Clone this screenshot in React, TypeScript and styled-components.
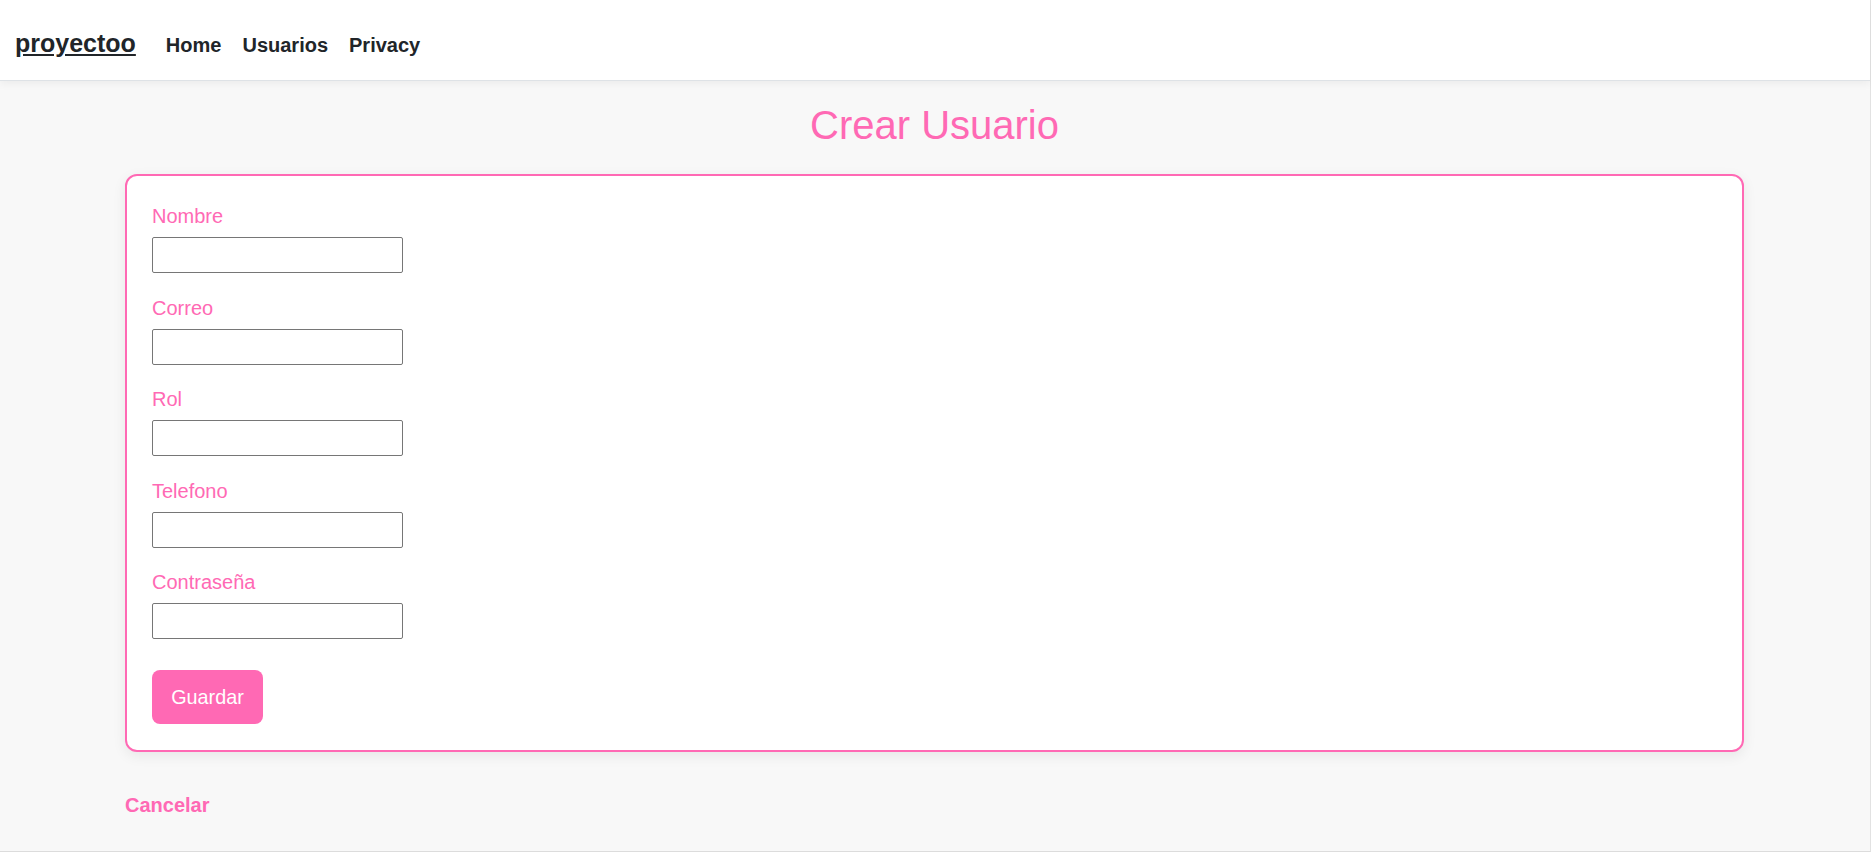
import styled, { createGlobalStyle } from "styled-components";

const GlobalStyle = createGlobalStyle`
  html, body {
    margin: 0;
    padding: 0;
  }
  body {
    font-family: "Liberation Sans", Arial, sans-serif;
    background: #f8f8f8;
    color: #212529;
  }
`;

const Page = styled.div`
  min-height: 100vh;
  box-sizing: border-box;
  border-right: 1px solid #e2e2e2;
  border-bottom: 1px solid #dcdcdc;
  background: #f8f8f8;
`;

const NavBar = styled.nav`
  height: 81px;
  box-sizing: border-box;
  padding: 29px 15px 0;
  display: flex;
  align-items: baseline;
  background: #fff;
  border-bottom: 1px solid #dee2e6;
  box-shadow: 0 3px 8px rgba(0, 0, 0, 0.05);
`;

const Brand = styled.a`
  font-size: 25px;
  font-weight: bold;
  color: #212529;
  text-decoration: underline;
  margin-right: 30px;
`;

const NavLinks = styled.div`
  display: flex;
  gap: 21px;
`;

const NavLink = styled.a`
  font-size: 20px;
  font-weight: bold;
  color: #212529;
  text-decoration: none;
`;

const Main = styled.main`
  padding: 0 126px 0 125px;
`;

const Title = styled.h1`
  margin: 22px 0 26px;
  font-size: 40px;
  font-weight: normal;
  line-height: normal;
  color: #ff69b4;
  text-align: center;
`;

const Card = styled.form`
  background: #fff;
  border: 2px solid #ff69b4;
  border-radius: 12px;
  box-shadow: 0 4px 14px rgba(0, 0, 0, 0.07);
  padding: 29px 25px 26px;
  display: flex;
  flex-direction: column;
  align-items: flex-start;
`;

const Field = styled.div`
  display: flex;
  flex-direction: column;
  align-items: flex-start;
  margin-bottom: 23.5px;

  &:last-of-type {
    margin-bottom: 31px;
  }
`;

const Label = styled.label`
  font-size: 20px;
  color: #ff69b4;
  margin-bottom: 9px;
`;

const Input = styled.input`
  width: 251px;
  height: 36px;
  box-sizing: border-box;
  border: 1px solid #767676;
  border-radius: 2px;
  padding: 4px 6px;
  font-family: "Liberation Sans", Arial, sans-serif;
  font-size: 16px;
  background: #fff;
  margin: 0;
`;

const SaveButton = styled.button`
  width: 111px;
  height: 54px;
  border: none;
  border-radius: 8px;
  background: #ff69b4;
  color: #fff;
  font-family: "Liberation Sans", Arial, sans-serif;
  font-size: 19.8px;
  cursor: pointer;
`;

const CancelLink = styled.a`
  display: inline-block;
  margin-top: 42px;
  font-size: 20px;
  font-weight: bold;
  color: #ff69b4;
  text-decoration: none;
`;

const fields = [
  { id: "nombre", label: "Nombre", type: "text" },
  { id: "correo", label: "Correo", type: "email" },
  { id: "rol", label: "Rol", type: "text" },
  { id: "telefono", label: "Telefono", type: "text" },
  { id: "password", label: "Contraseña", type: "password" },
];

export default function App() {
  return (
    <Page>
      <GlobalStyle />
      <NavBar>
        <Brand href="#">proyectoo</Brand>
        <NavLinks>
          <NavLink href="#">Home</NavLink>
          <NavLink href="#">Usuarios</NavLink>
          <NavLink href="#">Privacy</NavLink>
        </NavLinks>
      </NavBar>

      <Main>
        <Title>Crear Usuario</Title>
        <Card onSubmit={(e) => e.preventDefault()}>
          {fields.map((f) => (
            <Field key={f.id}>
              <Label htmlFor={f.id}>{f.label}</Label>
              <Input id={f.id} type={f.type} />
            </Field>
          ))}
          <SaveButton type="submit">Guardar</SaveButton>
        </Card>
        <CancelLink href="#">Cancelar</CancelLink>
      </Main>
    </Page>
  );
}
